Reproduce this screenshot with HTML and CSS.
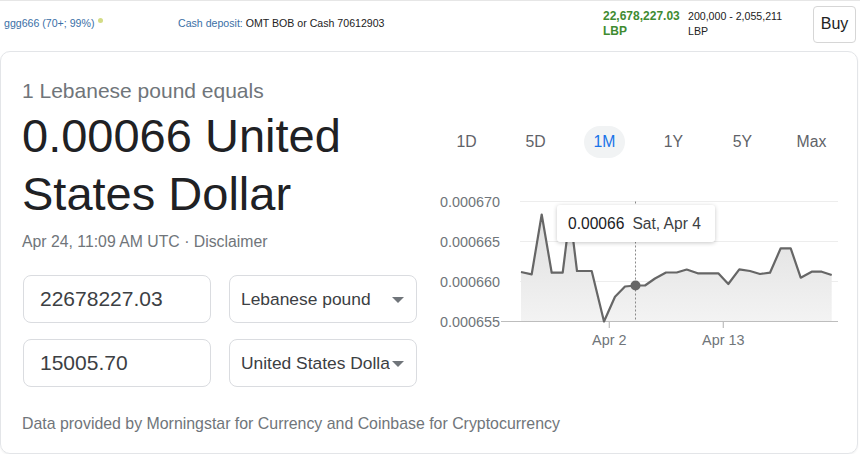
FILE: index.html
```html
<!DOCTYPE html>
<html lang="en">
<head>
<meta charset="utf-8">
<title>Currency converter</title>
<link rel="stylesheet" href="styles.css">
</head>
<body>
<div class="topbar">
  <div class="seller"><span class="link">ggg666 (70+; 99%)</span><span class="status-dot"></span></div>
  <div class="deposit"><span class="link">Cash deposit:</span> OMT BOB or Cash 70612903</div>
  <div class="price">22,678,227.03<br>LBP</div>
  <div class="range">200,000 - 2,055,211<br>LBP</div>
  <button class="buy">Buy</button>
</div>

<div class="card">
  <div class="card-main">
    <div class="left">
      <div class="subtitle">1 Lebanese pound equals</div>
      <div class="result">0.00066 United States Dollar</div>
      <div class="meta">Apr 24, 11:09 AM UTC · Disclaimer</div>
      <div class="row">
        <div class="field">22678227.03</div>
        <div class="select"><span class="select-text">Lebanese pound</span><span class="arrow"></span></div>
      </div>
      <div class="row">
        <div class="field">15005.70</div>
        <div class="select"><span class="select-text">United States Dollar</span><span class="arrow"></span></div>
      </div>
    </div>
    <div class="right">
      <div class="tabs">
        <span class="tab">1D</span>
        <span class="tab">5D</span>
        <span class="tab active">1M</span>
        <span class="tab">1Y</span>
        <span class="tab">5Y</span>
        <span class="tab">Max</span>
      </div>
      <div class="chart">
        <svg width="414" height="165" viewBox="0 0 414 165" xmlns="http://www.w3.org/2000/svg">
          <defs>
            <linearGradient id="fillg" x1="0" y1="10" x2="0" y2="132" gradientUnits="userSpaceOnUse">
              <stop offset="0" stop-color="#dcdcdc"/>
              <stop offset="1" stop-color="#f3f3f3"/>
            </linearGradient>
          </defs>
          <g stroke="#ededed" stroke-width="1">
            <line x1="88" y1="11.5" x2="406" y2="11.5"/>
            <line x1="88" y1="51.5" x2="406" y2="51.5"/>
            <line x1="88" y1="91.5" x2="406" y2="91.5"/>
          </g>
          <polygon fill="url(#fillg)" points="89,82 99.7,84.3 109.7,24.5 119.7,82.7 130.7,82.7 138,24 145,81 159.7,81 172,131.5 183,106.7 193,96.5 203.5,95.5 213,95.5 223,88.5 234,82.5 244.7,82.5 254.7,79.5 265.7,83.3 275.3,83.3 286.3,83.3 296.3,94 307.3,79.3 318,81 328,84 338,82.7 348.7,58.3 358.7,58.3 368.7,87.7 379.7,81.7 389.7,81.7 399.7,85 399.7,131.5 89,131.5"/>
          <line x1="69" y1="131.5" x2="406" y2="131.5" stroke="#bdbdbd" stroke-width="1.2"/>
          <line x1="177.3" y1="131.5" x2="177.3" y2="138" stroke="#bdbdbd" stroke-width="1.2"/>
          <line x1="291.3" y1="131.5" x2="291.3" y2="138" stroke="#bdbdbd" stroke-width="1.2"/>
          <line x1="203.5" y1="11.5" x2="203.5" y2="131.5" stroke="#8a8a8a" stroke-width="1" stroke-dasharray="2,2"/>
          <polyline fill="none" stroke="#666" stroke-width="2.2" stroke-linejoin="round" points="89,82 99.7,84.3 109.7,24.5 119.7,82.7 130.7,82.7 138,24 145,81 159.7,81 172,131.5 183,106.7 193,96.5 203.5,95.5 213,95.5 223,88.5 234,82.5 244.7,82.5 254.7,79.5 265.7,83.3 275.3,83.3 286.3,83.3 296.3,94 307.3,79.3 318,81 328,84 338,82.7 348.7,58.3 358.7,58.3 368.7,87.7 379.7,81.7 389.7,81.7 399.7,85"/>
          <circle cx="203.5" cy="95.5" r="5" fill="#666"/>
          <g class="axis-text" text-anchor="end">
            <text x="68" y="16.8">0.000670</text>
            <text x="68" y="56.8">0.000665</text>
            <text x="68" y="96.8">0.000660</text>
            <text x="68" y="136.8">0.000655</text>
          </g>
          <g class="axis-text" text-anchor="middle">
            <text x="177.3" y="154.5">Apr 2</text>
            <text x="291.3" y="154.5">Apr 13</text>
          </g>
        </svg>
        <div class="tooltip"><span class="tip-val">0.00066</span><span class="tip-date">Sat, Apr 4</span></div>
      </div>
    </div>
  </div>
  <div class="source">Data provided by Morningstar for Currency and Coinbase for Cryptocurrency</div>
</div>
</body>
</html>
```
FILE: styles.css
```css
* { box-sizing: border-box; }

body {
  margin: 0;
  background: #fff;
  font-family: "Liberation Sans", Arial, sans-serif;
  color: #202124;
}

.topbar {
  display: flex;
  align-items: center;
  height: 47px;
  border-top: 1px solid #e6e6e6;
  padding-left: 4px;
  font-size: 10.6px;
  color: #222;
}

.link { color: #3a6fa6; }

.seller {
  width: 174px;
  margin-top: -2px;
}

.status-dot {
  display: inline-block;
  width: 5px;
  height: 5px;
  border-radius: 50%;
  background: #d3dc86;
  margin-left: 4px;
  vertical-align: 4px;
}

.deposit {
  flex: 1;
  margin-top: -2px;
}

.price {
  width: 85px;
  font-size: 12px;
  font-weight: bold;
  line-height: 15px;
  color: #3f8b31;
}

.range {
  width: 125px;
  line-height: 15px;
}

.buy {
  width: 43px;
  height: 37px;
  margin-right: 4px;
  padding: 0;
  border: 1px solid #d6d6d6;
  border-radius: 4px;
  background: #fff;
  font-family: "Liberation Sans", Arial, sans-serif;
  font-size: 16px;
  color: #222;
}

.card {
  width: 858px;
  height: 403px;
  margin-top: 4px;
  border: 1px solid #e3e5e8;
  border-radius: 10px;
  box-shadow: 0 1px 2px rgba(0, 0, 0, 0.06);
  padding: 27px 0 0 21px;
}

.card-main {
  display: grid;
  grid-template-columns: 410px 414px;
}

.subtitle {
  font-size: 21px;
  line-height: 24px;
  color: #70757a;
}

.result {
  margin-top: 4px;
  font-size: 47px;
  line-height: 58px;
  color: #202124;
  width: 380px;
}

.meta {
  margin-top: 9px;
  font-size: 15.8px;
  line-height: 20px;
  color: #70757a;
}

.row {
  display: flex;
  gap: 18px;
  margin-left: 1px;
  margin-top: 16px;
}

.meta + .row { margin-top: 23px; }

.field,
.select {
  position: relative;
  width: 188px;
  height: 48px;
  border: 1px solid #dadce0;
  border-radius: 8px;
  display: flex;
  align-items: center;
}

.field {
  padding-left: 16px;
  font-size: 21px;
  color: #3c4043;
}

.select {
  padding-left: 11px;
  font-size: 17.4px;
  color: #3c4043;
}

.select-text {
  width: 149px;
  overflow: hidden;
  white-space: nowrap;
}

.arrow {
  position: absolute;
  right: 12px;
  top: 21px;
  width: 0;
  height: 0;
  border-left: 6px solid transparent;
  border-right: 6px solid transparent;
  border-top: 6px solid #70757a;
}

.right {
  padding-top: 47px;
}

.tabs {
  display: grid;
  grid-template-columns: repeat(6, 69px);
  height: 32px;
  align-items: center;
  justify-items: center;
}

.tab {
  font-size: 15.8px;
  color: #5f6368;
  line-height: 32px;
  padding: 0 10px;
  border-radius: 16px;
}

.tab.active {
  color: #1a73e8;
  background: #f1f3f4;
}

.chart {
  position: relative;
  margin-top: 32px;
  height: 165px;
}

.chart svg { display: block; }

.axis-text text {
  font-family: "Liberation Sans", Arial, sans-serif;
  font-size: 14.4px;
  fill: #70757a;
}

.tooltip {
  position: absolute;
  left: 125px;
  top: 15px;
  width: 158px;
  height: 37px;
  background: #fff;
  border-radius: 3px;
  box-shadow: 0 1px 4px rgba(0, 0, 0, 0.22);
  display: flex;
  align-items: center;
  padding-left: 11px;
  font-size: 15.6px;
}

.tip-val {
  color: #202124;
  margin-right: 8px;
}

.tip-date {
  color: #3c4043;
}

.source {
  margin-top: 27px;
  font-size: 15.9px;
  line-height: 20px;
  color: #70757a;
}
```
